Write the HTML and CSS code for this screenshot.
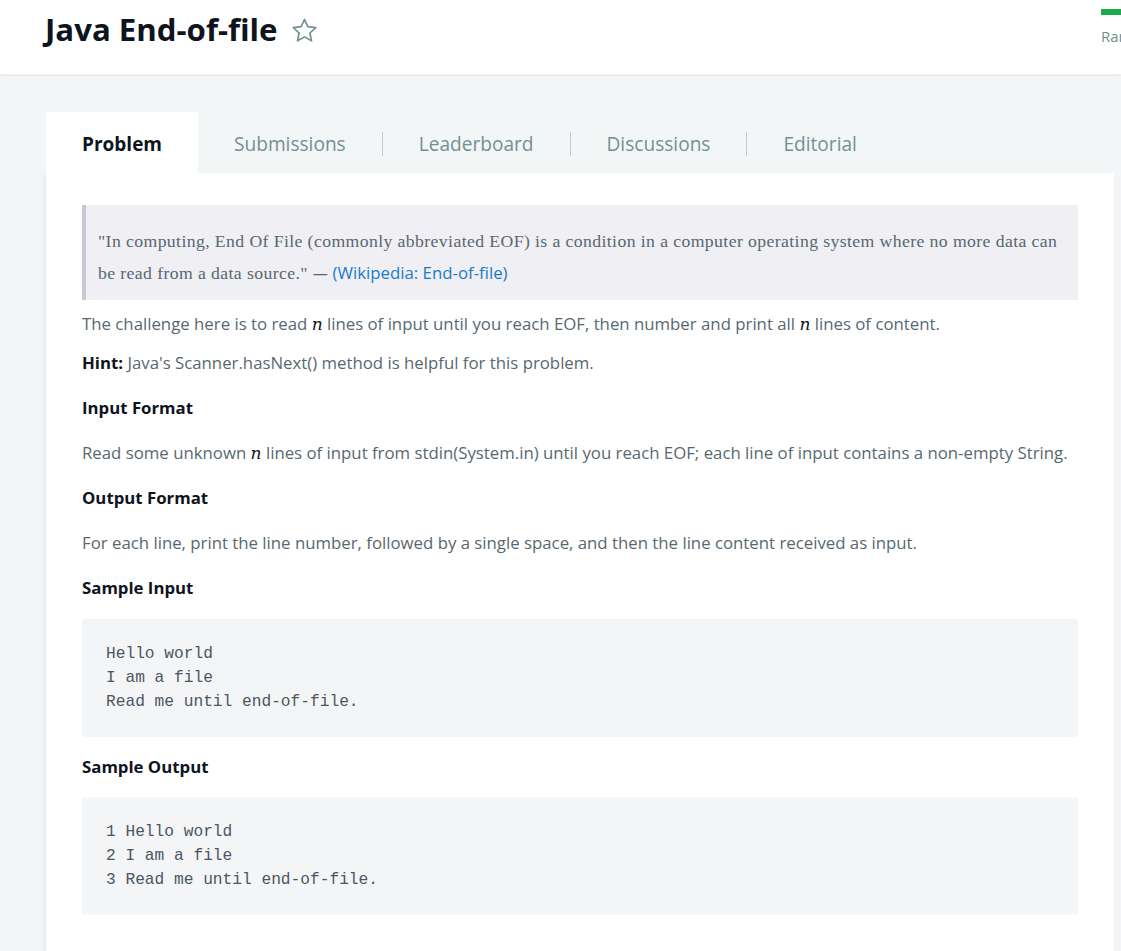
FILE: index.html
```html
<!DOCTYPE html>
<html>
<head>
<meta charset="utf-8">
<title>Java End-of-file</title>
<link rel="stylesheet" href="styles.css">
</head>
<body>
<header class="page-header">
  <div class="title-wrap">
    <h1 class="title">Java End-of-file</h1>
    <svg class="star" viewBox="2 2 20 20" width="25" height="25" aria-hidden="true">
      <path d="M12 3.2l2.7 5.75 6.3.75-4.65 4.3 1.25 6.25L12 17.1l-5.6 3.15 1.25-6.25L3 9.7l6.3-.75z" fill="none" stroke="#738f93" stroke-width="1.35" stroke-linejoin="round"/>
    </svg>
  </div>
  <div class="rank">
    <div class="rank-bar"></div>
    <div class="rank-label">Rank</div>
  </div>
</header>

<main class="main">
  <nav class="tabs">
    <div class="tab active">Problem</div>
    <div class="tab"><span class="tab-text sep">Submissions</span></div>
    <div class="tab"><span class="tab-text sep">Leaderboard</span></div>
    <div class="tab"><span class="tab-text sep">Discussions</span></div>
    <div class="tab"><span class="tab-text">Editorial</span></div>
  </nav>

  <section class="card">
    <blockquote class="quote">"In computing, End Of File (commonly abbreviated EOF) is a condition in a computer operating system where no more data can be read from a data source." <span class="dash">—</span> <span class="link">(<a href="#">Wikipedia: End-of-file</a>)</span></blockquote>

    <p class="text first">The challenge here is to read <span class="math">n</span> lines of input until you reach EOF, then number and print all <span class="math">n</span> lines of content.</p>
    <p class="text hint"><strong>Hint:</strong> Java's Scanner.hasNext() method is helpful for this problem.</p>

    <h3 class="heading">Input Format</h3>
    <p class="text">Read some unknown <span class="math">n</span> lines of input from stdin(System.in) until you reach EOF; each line of input contains a non-empty String.</p>

    <h3 class="heading">Output Format</h3>
    <p class="text">For each line, print the line number, followed by a single space, and then the line content received as input.</p>

    <h3 class="heading">Sample Input</h3>
    <pre class="code code-in">Hello world
I am a file
Read me until end-of-file.</pre>

    <h3 class="heading">Sample Output</h3>
    <pre class="code code-out">1 Hello world
2 I am a file
3 Read me until end-of-file.</pre>
  </section>
</main>
</body>
</html>
```

FILE: styles.css
```css
html, body {
  margin: 0;
  padding: 0;
}
body {
  background: #f3f6f7;
  font-family: "Open Sans", "Liberation Sans", sans-serif;
  overflow: hidden;
  height: 951px;
}

.page-header {
  background: #ffffff;
  height: 75px;
  display: flex;
  justify-content: space-between;
  align-items: flex-start;
  box-shadow: 0 1px 2px rgba(0, 0, 0, 0.05);
  border-bottom: 1px solid #eef1f2;
  box-sizing: border-box;
}
.title-wrap {
  display: flex;
  align-items: center;
  margin-left: 45px;
  height: 60px;
}
.title {
  margin: 0;
  font-size: 31.2px;
  font-weight: 700;
  color: #0e141e;
  line-height: 1;
}
.star {
  margin-left: 14px;
  display: block;
}
.rank {
  width: 60px;
  margin-right: -40px;
  padding-top: 9px;
}
.rank-bar {
  height: 6px;
  background: #1ba94c;
}
.rank-label {
  margin-top: 10px;
  font-size: 15px;
  color: #738f93;
  line-height: 22px;
}

.main {
  padding: 37px 7px 0 46px;
}
.tabs {
  display: flex;
  height: 61px;
}
.tab {
  display: flex;
  align-items: center;
  font-size: 19.1px;
  color: #738f93;
  padding-top: 3px;
  box-sizing: border-box;
}
.tab.active {
  background: #ffffff;
  color: #0e141e;
  font-weight: 700;
  font-size: 19px;
  padding: 3px 36px 0 36px;
}
.tab-text {
  display: block;
  padding: 0 36px;
  line-height: 24px;
}
.tab-text.sep {
  border-right: 1px solid #c2ccd0;
}

.card {
  background: #ffffff;
  padding: 32px 36px 40px 36px;
  min-height: 800px;
  box-shadow: -2px 2px 4px rgba(0, 0, 0, 0.06);
}

.quote {
  margin: 0;
  background: #f0eff4;
  border-left: 4px solid #c5c9d6;
  padding: 20px 14px 11px 12px;
  font-family: "Liberation Serif", "Times New Roman", serif;
  font-size: 17.7px;
  letter-spacing: 0.4px;
  line-height: 32px;
  color: #576871;
}
.quote .dash {
  font-family: "Open Sans", sans-serif;
  font-size: 15px;
  letter-spacing: 0;
}
.quote .link {
  font-family: "Open Sans", sans-serif;
  font-size: 16.8px;
  letter-spacing: 0;
  color: #1a7bc7;
}
.quote a {
  color: #1a7bc7;
  text-decoration: none;
}

.text {
  margin: 21px 0 0 0;
  font-size: 16.8px;
  line-height: 24px;
  color: #576871;
}
.text.first {
  margin-top: 12px;
}
.text.hint {
  margin-top: 15px;
}
.text strong {
  color: #0e141e;
  font-weight: 700;
}
.math {
  font-family: "DejaVu Serif", "Liberation Serif", serif;
  font-style: italic;
  font-size: 17px;
  color: #0e141e;
  line-height: 1;
}

.heading {
  margin: 21px 0 0 0;
  font-size: 16.8px;
  line-height: 24px;
  font-weight: 700;
  color: #0e141e;
}

.code {
  margin: 19px 0 0 0;
  background: #f3f5f7;
  border-radius: 3px;
  padding: 23px 24px;
  font-family: "Liberation Mono", "Courier New", monospace;
  font-size: 16.2px;
  line-height: 24px;
  color: #4d5560;
}
.code + .heading {
  margin-top: 18px;
}
.code-out {
  margin-top: 18px;
}
```
